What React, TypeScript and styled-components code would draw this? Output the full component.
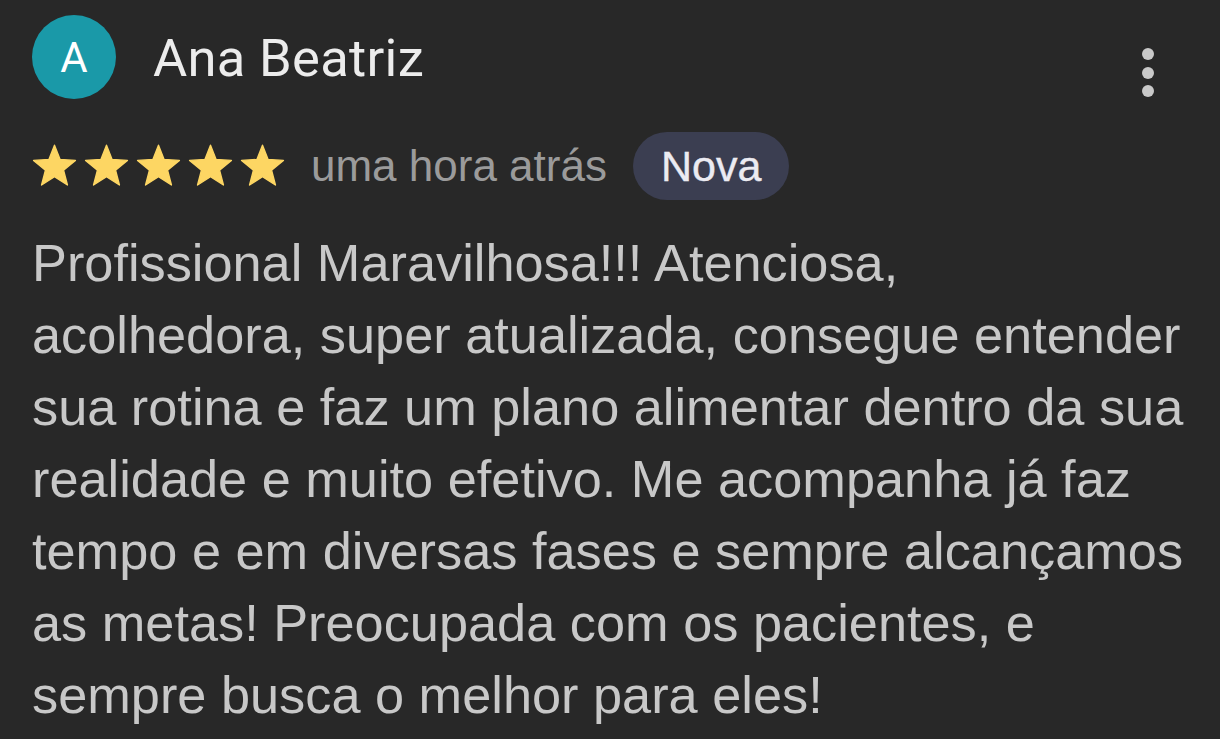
import React from "react";
import styled, { createGlobalStyle } from "styled-components";

const Global = createGlobalStyle`
  html, body { margin: 0; padding: 0; background: #282828; }
  body { width: 1220px; height: 739px; overflow: hidden; }
`;

const Card = styled.div`
  box-sizing: border-box;
  width: 1220px;
  height: 739px;
  background: #282828;
  padding: 15px 0 0 32px;
  display: flex;
  flex-direction: column;
`;

const Header = styled.div`
  display: flex;
  align-items: flex-start;
  height: 84px;
  padding-right: 66px;
`;

const Avatar = styled.div`
  width: 84px;
  height: 84px;
  border-radius: 50%;
  background: #1a99a8;
  color: #ffffff;
  display: flex;
  align-items: center;
  justify-content: center;
  font-family: Roboto, "Liberation Sans", sans-serif;
  font-size: 42px;
  flex-shrink: 0;
`;

const Name = styled.div`
  margin-left: 37px;
  font-family: Roboto, "Liberation Sans", sans-serif;
  font-size: 52.5px;
  line-height: 84px;
  letter-spacing: 0.3px;
  color: #ececec;
  flex: 1;
  margin-top: 1px;
`;

const Menu = styled.div`
  display: flex;
  flex-direction: column;
  gap: 6.5px;
  margin-top: 33px;
`;

const Dot = styled.span`
  width: 12px;
  height: 12px;
  border-radius: 50%;
  background: #c9c9c9;
`;

const RatingRow = styled.div`
  display: flex;
  align-items: center;
  margin-top: 33px;
  height: 68px;
`;

const Stars = styled.div`
  display: flex;
  gap: 7px;
  margin-top: -2px;
`;

const Ago = styled.span`
  margin-left: 26px;
  font-family: "Liberation Sans", Arial, sans-serif;
  font-size: 44px;
  color: #9b9b9b;
`;

const Badge = styled.span`
  margin-left: 26px;
  height: 68px;
  padding: 0 28px;
  border-radius: 34px;
  background: #3b3e51;
  color: #ebebf2;
  display: inline-flex;
  align-items: center;
  font-family: "Liberation Sans", Arial, sans-serif;
  font-size: 43px;
  -webkit-text-stroke: 0.4px #ebebf2;
`;

const Body = styled.div`
  margin-top: 27px;
  font-family: "Liberation Sans", Arial, sans-serif;
  font-size: 52.3px;
  line-height: 72px;
  color: #c8c8c8;
`;

const Line = styled.span`
  display: block;
  white-space: nowrap;
`;

const Star = () => (
  <svg width="45" height="43" viewBox="0 0 45 43">
    <path
      fill="#fdd663"
      stroke="#fdd663"
      strokeWidth="1.4"
      strokeLinejoin="round"
      d="M22.5 1.2 L28.08 15.51 L43.42 16.4 L31.54 26.14 L35.43 41 L22.5 32.7 L9.57 41 L13.46 26.14 L1.58 16.4 L16.92 15.51 Z"
    />
  </svg>
);

const lines = [
  "Profissional Maravilhosa!!! Atenciosa,",
  "acolhedora, super atualizada, consegue entender",
  "sua rotina e faz um plano alimentar dentro da sua",
  "realidade e muito efetivo. Me acompanha já faz",
  "tempo e em diversas fases e sempre alcançamos",
  "as metas! Preocupada com os pacientes, e",
  "sempre busca o melhor para eles!",
];

export default function App() {
  return (
    <>
      <Global />
      <Card>
        <Header>
          <Avatar>A</Avatar>
          <Name>Ana Beatriz</Name>
          <Menu>
            <Dot />
            <Dot />
            <Dot />
          </Menu>
        </Header>
        <RatingRow>
          <Stars>
            {[0, 1, 2, 3, 4].map((i) => (
              <Star key={i} />
            ))}
          </Stars>
          <Ago>uma hora atrás</Ago>
          <Badge>Nova</Badge>
        </RatingRow>
        <Body>
          {lines.map((l) => (
            <Line key={l}>{l}</Line>
          ))}
        </Body>
      </Card>
    </>
  );
}
